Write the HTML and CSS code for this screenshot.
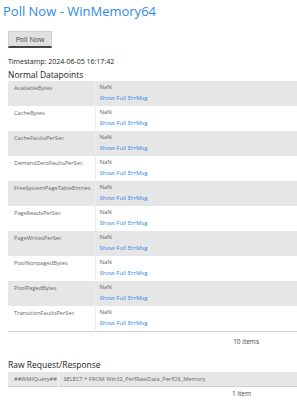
FILE: index.html
```html
<!DOCTYPE html>
<html lang="en">
<head>
    <meta charset="UTF-8">
    <title>Poll Now - WinMemory64</title>
    <link rel="stylesheet" href="styles.css">
</head>
<body>
    <h1 class="title">Poll Now - WinMemory64</h1>
    <div class="page">
        <button class="poll-btn">Poll Now</button>
        <div class="stamp">Timestamp: 2024-06-05 16:17:42</div>
        <h2 class="section">Normal Datapoints</h2>
        <table class="grid">
            <tr class="alt"><td class="name">AvailableBytes</td><td class="val">NaN<br><a href="javascript:;">Show Full ErrMsg</a></td></tr>
            <tr><td class="name">CacheBytes</td><td class="val">NaN<br><a href="javascript:;">Show Full ErrMsg</a></td></tr>
            <tr class="alt"><td class="name">CacheFaultsPerSec</td><td class="val">NaN<br><a href="javascript:;">Show Full ErrMsg</a></td></tr>
            <tr><td class="name">DemandZeroFaultsPerSec</td><td class="val">NaN<br><a href="javascript:;">Show Full ErrMsg</a></td></tr>
            <tr class="alt"><td class="name">FreeSystemPageTableEntries</td><td class="val">NaN<br><a href="javascript:;">Show Full ErrMsg</a></td></tr>
            <tr><td class="name">PageReadsPerSec</td><td class="val">NaN<br><a href="javascript:;">Show Full ErrMsg</a></td></tr>
            <tr class="alt"><td class="name">PageWritesPerSec</td><td class="val">NaN<br><a href="javascript:;">Show Full ErrMsg</a></td></tr>
            <tr><td class="name">PoolNonpagedBytes</td><td class="val">NaN<br><a href="javascript:;">Show Full ErrMsg</a></td></tr>
            <tr class="alt"><td class="name">PoolPagedBytes</td><td class="val">NaN<br><a href="javascript:;">Show Full ErrMsg</a></td></tr>
            <tr><td class="name">TransitionFaultsPerSec</td><td class="val">NaN<br><a href="javascript:;">Show Full ErrMsg</a></td></tr>
        </table>
        <div class="count">10 items</div>

        <h2 class="section raw-title">Raw Request/Response</h2>
        <table class="grid raw">
            <tr class="alt"><td class="key">##WMIQuery##</td><td class="query">SELECT * FROM Win32_PerfRawData_PerfOS_Memory</td></tr>
        </table>
        <div class="count last">1 item</div>
    </div>
</body>
</html>
```

FILE: styles.css
```css
*{
    box-sizing: border-box;
}
body{
    margin: 0;
    font-family: "Open Sans", "Noto Sans", sans-serif;
    color: #222;
    background: #fff;
    overflow: hidden;
}
.title{
    margin: 0;
    padding: 2px 0 0 3px;
    font-size: 13px;
    font-weight: normal;
    color: #2f8ae6;
    line-height: 18px;
}
.page{
    padding-left: 8px;
}
.poll-btn{
    display: block;
    margin-top: 11px;
    width: 44px;
    height: 17px;
    padding: 0;
    font-family: inherit;
    font-size: 7px;
    color: #444;
    background: #e0e0e0;
    border: 1px solid #d0d0d0;
    border-bottom: 2px solid #444;
}
.stamp{
    margin-top: 9px;
    font-size: 7px;
    line-height: 10px;
}
.section{
    margin: 1px 0 0;
    font-size: 8.5px;
    font-weight: normal;
    line-height: 13px;
}
.grid{
    width: 300px;
    border-collapse: collapse;
    margin-top: 0;
    font-size: 5.7px;
    border-bottom: 1px solid #cfcfcf;
}
.grid td{
    padding: 0 0 0 6px;
    vertical-align: top;
    color: #666;
}
.grid tr{
    height: 25px;
}
.grid .alt{
    background: #e6e6e6;
}
.name{
    width: 87px;
    padding-top: 2px !important;
    line-height: 10px;
}
.val{
    border-left: 1px solid #ececec;
    padding-left: 4px !important;
    padding-top: 1px !important;
    line-height: 11px;
    font-size: 6px;
}
.val a{
    color: #2f8ae6;
    text-decoration: none;
}
.count{
    text-align: right;
    padding-right: 38px;
    font-size: 6.5px;
    line-height: 20px;
    color: #444;
}
.raw-title{
    margin-top: 6px;
}
.raw{
    margin-top: 1px;
}
.raw tr{
    height: 15px;
}
.raw td{
    vertical-align: middle;
}
.key{
    width: 50px;
}
.query{
    border-left: 1px solid #f4f4f4;
    padding-left: 5px !important;
}
.last{
    line-height: 14px;
    padding-right: 46px;
}
```
